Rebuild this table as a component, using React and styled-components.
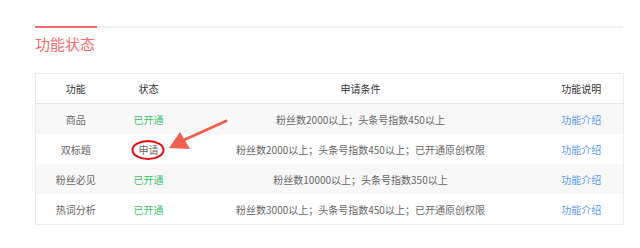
import React from "react";
import styled, { createGlobalStyle } from "styled-components";

const GlobalStyle = createGlobalStyle`
  body {
    margin: 0;
    background: #fff;
    font-family: "Noto Sans CJK SC", "Liberation Sans", sans-serif;
  }
`;

const Page = styled.div`
  position: relative;
  width: 588px;
  padding: 26px 0 0 35px;
`;

const TabLine = styled.div`
  height: 2px;
  background: #eeeff3;
  display: flex;
`;

const TabMark = styled.div`
  width: 62px;
  background: #f56c6c;
`;

const Title = styled.h2`
  margin: 6px 0 0;
  font-size: 15px;
  line-height: 20px;
  font-weight: normal;
  color: #f56c6c;
`;

const Table = styled.table`
  margin-top: 19px;
  width: 588px;
  border-collapse: collapse;
  border: 1px solid #ececec;
  table-layout: fixed;
  font-size: 10px;
`;

const HeadCell = styled.th`
  height: 29px;
  padding: 0;
  font-weight: normal;
  color: #333;
  text-align: center;
  border-bottom: 1px solid #e6e6e6;
`;

const Row = styled.tr`
  background: ${(p) => (p.$shaded ? "#f8f8f8" : "#fff")};
`;

const Cell = styled.td`
  height: 30px;
  padding: 0;
  text-align: center;
  color: ${(p) => p.$color || "#666"};
`;

const Link = styled.a`
  color: #5b9bf0;
  text-decoration: none;
`;

const Marks = styled.svg`
  position: absolute;
  left: 0;
  top: 0;
  pointer-events: none;
`;

const rows = [
  { name: "商品", state: "已开通", open: true, cond: "粉丝数2000以上；头条号指数450以上" },
  { name: "双标题", state: "申请", open: false, cond: "粉丝数2000以上；头条号指数450以上；已开通原创权限" },
  { name: "粉丝必见", state: "已开通", open: true, cond: "粉丝数10000以上；头条号指数350以上" },
  { name: "热词分析", state: "已开通", open: true, cond: "粉丝数3000以上；头条号指数450以上；已开通原创权限" },
];

export default function App() {
  return (
    <>
      <GlobalStyle />
      <Page>
        <TabLine>
          <TabMark />
        </TabLine>
        <Title>功能状态</Title>
        <Table>
          <colgroup>
            <col style={{ width: 80 }} />
            <col style={{ width: 66 }} />
            <col style={{ width: 358 }} />
            <col style={{ width: 84 }} />
          </colgroup>
          <thead>
            <tr>
              <HeadCell>功能</HeadCell>
              <HeadCell>状态</HeadCell>
              <HeadCell>申请条件</HeadCell>
              <HeadCell>功能说明</HeadCell>
            </tr>
          </thead>
          <tbody>
            {rows.map((r, i) => (
              <Row key={r.name} $shaded={i % 2 === 0}>
                <Cell>{r.name}</Cell>
                <Cell $color={r.open ? "#3cc46b" : "#666"}>{r.state}</Cell>
                <Cell>{r.cond}</Cell>
                <Cell>
                  <Link href="#">功能介绍</Link>
                </Cell>
              </Row>
            ))}
          </tbody>
        </Table>

        {/* hand-drawn callout on the 申请 button */}
        <Marks width="640" height="248" viewBox="0 0 640 248">
          <ellipse cx="148" cy="150" rx="15.5" ry="9" fill="none" stroke="#e20f0f" strokeWidth="2" />
          <line x1="226" y1="121" x2="184" y2="140" stroke="#f2604f" strokeWidth="3" strokeLinecap="round" />
          <polygon points="169,148 180,132 190,149" fill="#f2604f" />
        </Marks>
      </Page>
    </>
  );
}
